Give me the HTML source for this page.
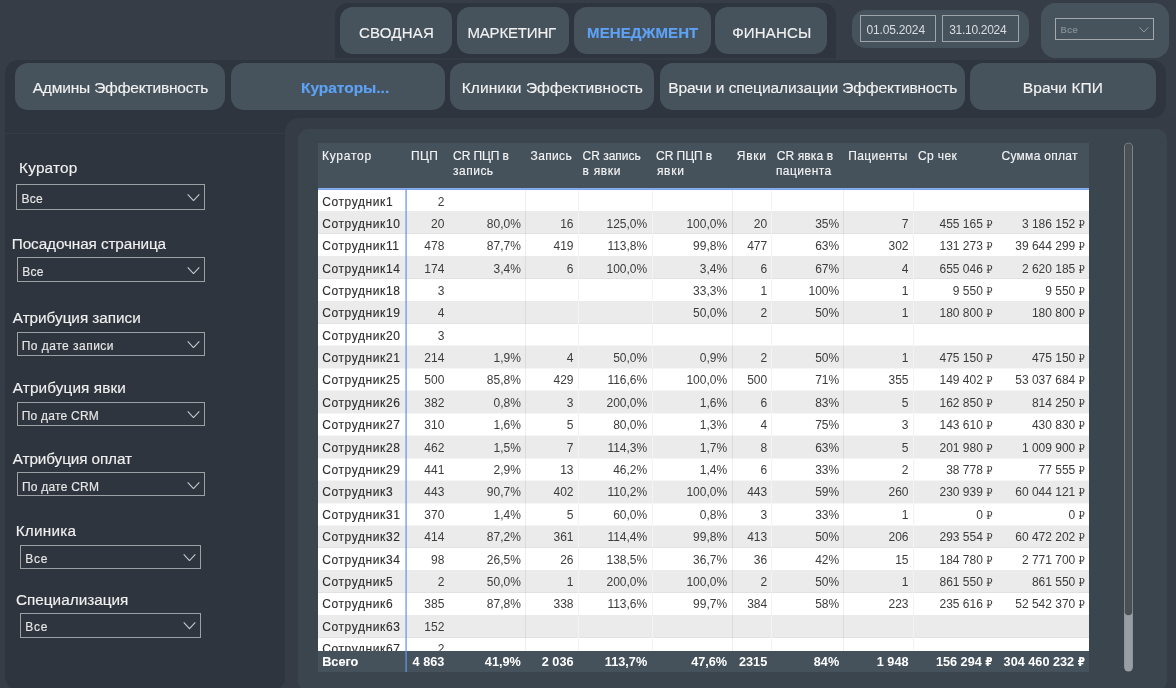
<!DOCTYPE html>
<html lang="ru"><head><meta charset="utf-8"><title>Менеджмент — Кураторы</title>
<style>
*{box-sizing:border-box;margin:0;padding:0}
html,body{width:1176px;height:688px;overflow:hidden}
body{background:#373d46;font-family:"Liberation Sans",sans-serif;position:relative;color:#fff}
#wrap{position:absolute;left:0;top:0;width:1176px;height:688px;overflow:hidden;will-change:transform}
.a{position:absolute}
.t{position:absolute;white-space:nowrap;line-height:1;-webkit-text-stroke:0.15px currentColor}
#tbl{position:absolute;left:0;top:0;width:1176px;height:688px;font-size:12px;color:#3c3c3c}
.row{position:absolute;left:318px;width:771px;overflow:hidden}
.rt{position:absolute;left:0;top:6.14px;width:100%;height:12px;line-height:12px}
.c{position:absolute;top:0;white-space:nowrap}
.c0{color:#2e2e2e;letter-spacing:0.6px;-webkit-text-stroke:0.12px currentColor}
.tot{font-weight:bold;color:#fff;font-size:12.7px}
.tot .rt{height:13px;line-height:12.7px}
.tot .rub{font-family:"DejaVu Sans Condensed","DejaVu Sans",sans-serif;font-size:11.5px}
.tot .c0{color:#fff;letter-spacing:0}
.rub{font-family:"DejaVu Serif Condensed","DejaVu Serif",serif;font-size:11px}
.vl{position:absolute;width:1px}
</style></head>
<body><div id="wrap">
<div class="a" style="left:335px;top:3px;width:501px;height:55px;background:#2f353e;border-radius:13px 13px 0 0"></div>
<div class="a" style="left:335px;top:58px;width:501px;height:2px;background:#343a43;border-radius:0"></div>
<div class="a" style="left:5px;top:59.5px;width:1161px;height:58.0px;background:#2f353e;border-radius:14px 14px 14px 0"></div>
<div class="a" style="left:5px;top:100px;width:295px;height:40px;background:#2f353e;border-radius:0"></div>
<div class="a" style="left:5px;top:117px;width:280.5px;height:573px;background:#2f353e;border-radius:0 0 14px 14px"></div>
<div class="a" style="left:5px;top:133px;width:280px;height:1px;background:#363c45;border-radius:0"></div>
<div class="a" style="left:285.3px;top:118.2px;width:914.7px;height:601.8px;background:#363c45;border-radius:14px 0 0 0"></div>
<div class="a" style="left:298px;top:128.5px;width:868.8px;height:562.0px;background:#3b454e;border-radius:10.5px"></div>
<div class="a" style="left:339.6px;top:7.1px;width:112.7px;height:46.7px;background:#46535d;border-radius:13px"></div>
<div id="n1" class="t" style="left:358.9px;top:24.7px;font-size:15px;color:#f1f1f1;letter-spacing:0.253px">СВОДНАЯ</div>
<div class="a" style="left:456.8px;top:7.1px;width:112.4px;height:46.7px;background:#46535d;border-radius:13px"></div>
<div id="n2" class="t" style="left:467.46px;top:24.7px;font-size:15px;color:#f1f1f1;letter-spacing:-0.17px">МАРКЕТИНГ</div>
<div class="a" style="left:574px;top:7.1px;width:137.3px;height:46.7px;background:#46535d;border-radius:13px"></div>
<div id="n3" class="t" style="left:587.0px;top:24.7px;font-size:15px;color:#5ea2f5;letter-spacing:0.133px;font-weight:bold">МЕНЕДЖМЕНТ</div>
<div class="a" style="left:714.8px;top:7.1px;width:112.4px;height:46.7px;background:#46535d;border-radius:13px"></div>
<div id="n4" class="t" style="left:732.16px;top:24.7px;font-size:15px;color:#f1f1f1;letter-spacing:0.213px">ФИНАНСЫ</div>
<div class="a" style="left:14.7px;top:63.1px;width:210.7px;height:46.6px;background:#46535d;border-radius:13px"></div>
<div id="m1" class="t" style="left:32.7px;top:80.18px;font-size:15.5px;color:#f1f1f1;letter-spacing:-0.177px">Админы Эффективность</div>
<div class="a" style="left:230.5px;top:63.1px;width:214.0px;height:46.6px;background:#46535d;border-radius:13px"></div>
<div id="m2" class="t" style="left:301.0px;top:80.18px;font-size:15.5px;color:#5ea2f5;letter-spacing:-0.024px;font-weight:bold">Кураторы...</div>
<div class="a" style="left:450px;top:63.1px;width:204.4px;height:46.6px;background:#46535d;border-radius:13px"></div>
<div id="m3" class="t" style="left:461.72px;top:80.18px;font-size:15.5px;color:#f1f1f1;letter-spacing:0.06px">Клиники Эффективность</div>
<div class="a" style="left:659.5px;top:63.1px;width:305.9px;height:46.6px;background:#46535d;border-radius:13px"></div>
<div id="m4" class="t" style="left:668.18px;top:80.18px;font-size:15.5px;color:#f1f1f1;letter-spacing:-0.096px">Врачи и специализации Эффективность</div>
<div class="a" style="left:969.5px;top:63.1px;width:186.5px;height:46.6px;background:#46535d;border-radius:13px"></div>
<div id="m5" class="t" style="left:1022.82px;top:80.18px;font-size:15.5px;color:#f1f1f1;letter-spacing:0.06px">Врачи КПИ</div>
<div class="a" style="left:851.5px;top:9.8px;width:177.7px;height:38.6px;background:#46535d;border-radius:14px"></div>
<div class="a" style="left:859.5px;top:15px;width:76.8px;height:26.9px;border:1px solid #9ea4a9"></div>
<div class="a" style="left:941.9px;top:15px;width:77.3px;height:26.9px;border:1px solid #9ea4a9"></div>
<div id="d1" class="t" style="left:866.44px;top:23.64px;font-size:12px;color:#d9dcdf;letter-spacing:-0.16px;-webkit-text-stroke:0">01.05.2024</div>
<div id="d2" class="t" style="left:949.16px;top:23.64px;font-size:12px;color:#d9dcdf;letter-spacing:-0.284px;-webkit-text-stroke:0">31.10.2024</div>
<div class="a" style="left:1041px;top:2.7px;width:127.7px;height:55.1px;background:#46535d;border-radius:14.5px"></div>
<div class="a" style="left:1055.1px;top:17.6px;width:99.3px;height:22.3px;border:1.2px solid #a3a8ad"></div>
<div id="s0" class="t" style="left:1060.44px;top:25.34px;font-size:9.4px;color:#8a9298;letter-spacing:0.51px">Все</div>
<svg class="a" style="left:1139.1px;top:27.2px" width="9.8" height="5.6" viewBox="0 0 9.8 5.6"><path d="M0.54 0.32 L4.9 5.06 L9.26 0.32" fill="none" stroke="#9aa0a6" stroke-width="0.9"/></svg>
<div id="l0" class="t" style="left:19.08px;top:160.05px;font-size:15.3px;color:#f0f0f0;letter-spacing:0.213px">Куратор</div>
<div class="a" style="left:16.2px;top:184.3px;width:188.8px;height:25.5px;border:1px solid #9da1a6"></div>
<div id="v0" class="t" style="left:21.54px;top:192.94px;font-size:12px;color:#e6e6e6;letter-spacing:0.2px">Все</div>
<svg class="a" style="left:186.8px;top:193.6px" width="13" height="7.3" viewBox="0 0 13 7.3"><path d="M0.69 0.41 L6.5 6.61 L12.31 0.41" fill="none" stroke="#c3c6ca" stroke-width="1.15"/></svg>
<div id="l1" class="t" style="left:11.82px;top:236.25px;font-size:15.3px;color:#f0f0f0;letter-spacing:-0.102px">Посадочная страница</div>
<div class="a" style="left:17px;top:257.4px;width:188px;height:24.2px;border:1px solid #9da1a6"></div>
<div id="v1" class="t" style="left:22.26px;top:265.64px;font-size:12px;color:#e6e6e6;letter-spacing:0.2px">Все</div>
<svg class="a" style="left:186.8px;top:266.7px" width="13" height="7.3" viewBox="0 0 13 7.3"><path d="M0.69 0.41 L6.5 6.61 L12.31 0.41" fill="none" stroke="#c3c6ca" stroke-width="1.15"/></svg>
<div id="l2" class="t" style="left:12.8px;top:310.25px;font-size:15.3px;color:#f0f0f0;letter-spacing:-0.027px">Атрибуция записи</div>
<div class="a" style="left:17px;top:331.6px;width:188px;height:24.1px;border:1px solid #9da1a6"></div>
<div id="v2" class="t" style="left:21.72px;top:340.04px;font-size:12px;color:#e6e6e6;letter-spacing:0.486px">По дате записи</div>
<svg class="a" style="left:186.8px;top:340.9px" width="13" height="7.3" viewBox="0 0 13 7.3"><path d="M0.69 0.41 L6.5 6.61 L12.31 0.41" fill="none" stroke="#c3c6ca" stroke-width="1.15"/></svg>
<div id="l3" class="t" style="left:12.8px;top:380.25px;font-size:15.3px;color:#f0f0f0;letter-spacing:0.123px">Атрибуция явки</div>
<div class="a" style="left:17px;top:401.6px;width:188px;height:24.1px;border:1px solid #9da1a6"></div>
<div id="v3" class="t" style="left:21.72px;top:409.94px;font-size:12px;color:#e6e6e6;letter-spacing:0.24px">По дате CRM</div>
<svg class="a" style="left:186.8px;top:410.9px" width="13" height="7.3" viewBox="0 0 13 7.3"><path d="M0.69 0.41 L6.5 6.61 L12.31 0.41" fill="none" stroke="#c3c6ca" stroke-width="1.15"/></svg>
<div id="l4" class="t" style="left:12.8px;top:450.75px;font-size:15.3px;color:#f0f0f0;letter-spacing:-0.109px">Атрибуция оплат</div>
<div class="a" style="left:17px;top:472.3px;width:188px;height:24.1px;border:1px solid #9da1a6"></div>
<div id="v4" class="t" style="left:21.9px;top:480.54px;font-size:12px;color:#e6e6e6;letter-spacing:0.232px">По дате CRM</div>
<svg class="a" style="left:186.8px;top:481.6px" width="13" height="7.3" viewBox="0 0 13 7.3"><path d="M0.69 0.41 L6.5 6.61 L12.31 0.41" fill="none" stroke="#c3c6ca" stroke-width="1.15"/></svg>
<div id="l5" class="t" style="left:15.72px;top:523.05px;font-size:15.3px;color:#f0f0f0;letter-spacing:0.227px">Клиника</div>
<div class="a" style="left:20.3px;top:544.7px;width:180.5px;height:24.3px;border:1px solid #9da1a6"></div>
<div id="v5" class="t" style="left:25.36px;top:552.94px;font-size:12px;color:#e6e6e6;letter-spacing:0.72px">Все</div>
<svg class="a" style="left:182.6px;top:554.0px" width="13" height="7.3" viewBox="0 0 13 7.3"><path d="M0.69 0.41 L6.5 6.61 L12.31 0.41" fill="none" stroke="#c3c6ca" stroke-width="1.15"/></svg>
<div id="l6" class="t" style="left:15.98px;top:591.55px;font-size:15.3px;color:#f0f0f0;letter-spacing:0.013px">Специализация</div>
<div class="a" style="left:20.3px;top:613px;width:180.5px;height:24.6px;border:1px solid #9da1a6"></div>
<div id="v6" class="t" style="left:25.18px;top:621.14px;font-size:12px;color:#e6e6e6;letter-spacing:0.75px">Все</div>
<svg class="a" style="left:182.6px;top:622.3px" width="13" height="7.3" viewBox="0 0 13 7.3"><path d="M0.69 0.41 L6.5 6.61 L12.31 0.41" fill="none" stroke="#c3c6ca" stroke-width="1.15"/></svg>
<div id="tbl">
<div class="a" style="left:318px;top:143px;width:771px;height:46.5px;background:#45525c;border-radius:0"></div>
<div id="h0" class="t" style="left:322.0px;top:149.84px;font-size:12px;color:#f3f3f3;letter-spacing:0.75px">Куратор</div>
<div id="h1" class="t" style="left:410.9px;top:149.84px;font-size:12px;color:#f3f3f3;letter-spacing:0.47px">ПЦП</div>
<div id="h2" class="t" style="left:453.08px;top:149.84px;font-size:12px;color:#f3f3f3;letter-spacing:-0.091px">CR ПЦП в</div>
<div id="h3" class="t" style="left:453.08px;top:165.44px;font-size:12px;color:#f3f3f3;letter-spacing:0.48px">запись</div>
<div id="h4" class="t" style="left:530.52px;top:149.84px;font-size:12px;color:#f3f3f3;letter-spacing:0.368px">Запись</div>
<div id="h5" class="t" style="left:582.62px;top:149.84px;font-size:12px;color:#f3f3f3;letter-spacing:-0.02px">CR запись</div>
<div id="h6" class="t" style="left:582.62px;top:165.44px;font-size:12px;color:#f3f3f3;letter-spacing:0.67px">в явки</div>
<div id="h7" class="t" style="left:656.08px;top:149.84px;font-size:12px;color:#f3f3f3;letter-spacing:-0.057px">CR ПЦП в</div>
<div id="h8" class="t" style="left:656.88px;top:165.44px;font-size:12px;color:#f3f3f3;letter-spacing:0.75px">явки</div>
<div id="h9" class="t" style="left:736.8px;top:149.84px;font-size:12px;color:#f3f3f3;letter-spacing:0.75px">Явки</div>
<div id="h10" class="t" style="left:776.7px;top:149.84px;font-size:12px;color:#f3f3f3;letter-spacing:0.12px">CR явка в</div>
<div id="h11" class="t" style="left:775.9px;top:165.44px;font-size:12px;color:#f3f3f3;letter-spacing:0.469px">пациента</div>
<div id="h12" class="t" style="left:848.26px;top:149.84px;font-size:12px;color:#f3f3f3;letter-spacing:0.389px">Пациенты</div>
<div id="h13" class="t" style="left:917.98px;top:149.84px;font-size:12px;color:#f3f3f3;letter-spacing:0.4px">Ср чек</div>
<div id="h14" class="t" style="left:1001.44px;top:149.84px;font-size:12px;color:#f3f3f3;letter-spacing:0.296px">Сумма оплат</div>
<div class="a" style="left:318px;top:188px;width:771px;height:463.1px;background:#ffffff;border-radius:0"></div>
<div class="a" style="left:318px;top:210.84px;width:771px;height:1.0px;background:rgba(0,0,0,0.035);border-radius:0"></div>
<div class="a" style="left:318px;top:211.34px;width:771px;height:22.44px;background:#ebebeb;border-radius:0"></div>
<div class="a" style="left:318px;top:233.28px;width:771px;height:1.0px;background:rgba(0,0,0,0.035);border-radius:0"></div>
<div class="a" style="left:318px;top:255.72px;width:771px;height:1.0px;background:rgba(0,0,0,0.035);border-radius:0"></div>
<div class="a" style="left:318px;top:256.22px;width:771px;height:22.44px;background:#ebebeb;border-radius:0"></div>
<div class="a" style="left:318px;top:278.16px;width:771px;height:1.0px;background:rgba(0,0,0,0.035);border-radius:0"></div>
<div class="a" style="left:318px;top:300.6px;width:771px;height:1.0px;background:rgba(0,0,0,0.035);border-radius:0"></div>
<div class="a" style="left:318px;top:301.1px;width:771px;height:22.44px;background:#ebebeb;border-radius:0"></div>
<div class="a" style="left:318px;top:323.04px;width:771px;height:1.0px;background:rgba(0,0,0,0.035);border-radius:0"></div>
<div class="a" style="left:318px;top:345.48px;width:771px;height:1.0px;background:rgba(0,0,0,0.035);border-radius:0"></div>
<div class="a" style="left:318px;top:345.98px;width:771px;height:22.44px;background:#ebebeb;border-radius:0"></div>
<div class="a" style="left:318px;top:367.92px;width:771px;height:1.0px;background:rgba(0,0,0,0.035);border-radius:0"></div>
<div class="a" style="left:318px;top:390.36px;width:771px;height:1.0px;background:rgba(0,0,0,0.035);border-radius:0"></div>
<div class="a" style="left:318px;top:390.86px;width:771px;height:22.44px;background:#ebebeb;border-radius:0"></div>
<div class="a" style="left:318px;top:412.8px;width:771px;height:1.0px;background:rgba(0,0,0,0.035);border-radius:0"></div>
<div class="a" style="left:318px;top:435.24px;width:771px;height:1.0px;background:rgba(0,0,0,0.035);border-radius:0"></div>
<div class="a" style="left:318px;top:435.74px;width:771px;height:22.44px;background:#ebebeb;border-radius:0"></div>
<div class="a" style="left:318px;top:457.68px;width:771px;height:1.0px;background:rgba(0,0,0,0.035);border-radius:0"></div>
<div class="a" style="left:318px;top:480.12px;width:771px;height:1.0px;background:rgba(0,0,0,0.035);border-radius:0"></div>
<div class="a" style="left:318px;top:480.62px;width:771px;height:22.44px;background:#ebebeb;border-radius:0"></div>
<div class="a" style="left:318px;top:502.56px;width:771px;height:1.0px;background:rgba(0,0,0,0.035);border-radius:0"></div>
<div class="a" style="left:318px;top:525.0px;width:771px;height:1.0px;background:rgba(0,0,0,0.035);border-radius:0"></div>
<div class="a" style="left:318px;top:525.5px;width:771px;height:22.44px;background:#ebebeb;border-radius:0"></div>
<div class="a" style="left:318px;top:547.44px;width:771px;height:1.0px;background:rgba(0,0,0,0.035);border-radius:0"></div>
<div class="a" style="left:318px;top:569.88px;width:771px;height:1.0px;background:rgba(0,0,0,0.035);border-radius:0"></div>
<div class="a" style="left:318px;top:570.38px;width:771px;height:22.44px;background:#ebebeb;border-radius:0"></div>
<div class="a" style="left:318px;top:592.32px;width:771px;height:1.0px;background:rgba(0,0,0,0.035);border-radius:0"></div>
<div class="a" style="left:318px;top:614.76px;width:771px;height:1.0px;background:rgba(0,0,0,0.035);border-radius:0"></div>
<div class="a" style="left:318px;top:615.26px;width:771px;height:22.44px;background:#ebebeb;border-radius:0"></div>
<div class="a" style="left:318px;top:637.2px;width:771px;height:1.0px;background:rgba(0,0,0,0.035);border-radius:0"></div>
<div class="row" style="top:196.04px;height:14px"><div class="rt" style="top:0"><div class="c c0" style="left:4.2px">Сотрудник1</div><div class="c" style="right:644.7px">2</div></div></div>
<div class="row" style="top:217.82px;height:14px"><div class="rt" style="top:0"><div class="c c0" style="left:4.2px">Сотрудник10</div><div class="c" style="right:644.7px">20</div><div class="c" style="right:568.2px">80,0%</div><div class="c" style="right:515.5px">16</div><div class="c" style="right:441.8px">125,0%</div><div class="c" style="right:361.9px">100,0%</div><div class="c" style="right:321.8px">20</div><div class="c" style="right:249.8px">35%</div><div class="c" style="right:180.5px">7</div><div class="c" style="right:96.5px">455 165 <span class="rub">₽</span></div><div class="c" style="right:4.1px">3 186 152 <span class="rub">₽</span></div></div></div>
<div class="row" style="top:240.2px;height:14px"><div class="rt" style="top:0"><div class="c c0" style="left:4.2px">Сотрудник11</div><div class="c" style="right:644.7px">478</div><div class="c" style="right:568.2px">87,7%</div><div class="c" style="right:515.5px">419</div><div class="c" style="right:441.8px">113,8%</div><div class="c" style="right:361.9px">99,8%</div><div class="c" style="right:321.8px">477</div><div class="c" style="right:249.8px">63%</div><div class="c" style="right:180.5px">302</div><div class="c" style="right:96.5px">131 273 <span class="rub">₽</span></div><div class="c" style="right:4.1px">39 644 299 <span class="rub">₽</span></div></div></div>
<div class="row" style="top:262.58px;height:14px"><div class="rt" style="top:0"><div class="c c0" style="left:4.2px">Сотрудник14</div><div class="c" style="right:644.7px">174</div><div class="c" style="right:568.2px">3,4%</div><div class="c" style="right:515.5px">6</div><div class="c" style="right:441.8px">100,0%</div><div class="c" style="right:361.9px">3,4%</div><div class="c" style="right:321.8px">6</div><div class="c" style="right:249.8px">67%</div><div class="c" style="right:180.5px">4</div><div class="c" style="right:96.5px">655 046 <span class="rub">₽</span></div><div class="c" style="right:4.1px">2 620 185 <span class="rub">₽</span></div></div></div>
<div class="row" style="top:284.96px;height:14px"><div class="rt" style="top:0"><div class="c c0" style="left:4.2px">Сотрудник18</div><div class="c" style="right:644.7px">3</div><div class="c" style="right:361.9px">33,3%</div><div class="c" style="right:321.8px">1</div><div class="c" style="right:249.8px">100%</div><div class="c" style="right:180.5px">1</div><div class="c" style="right:96.5px">9 550 <span class="rub">₽</span></div><div class="c" style="right:4.1px">9 550 <span class="rub">₽</span></div></div></div>
<div class="row" style="top:307.34px;height:14px"><div class="rt" style="top:0"><div class="c c0" style="left:4.2px">Сотрудник19</div><div class="c" style="right:644.7px">4</div><div class="c" style="right:361.9px">50,0%</div><div class="c" style="right:321.8px">2</div><div class="c" style="right:249.8px">50%</div><div class="c" style="right:180.5px">1</div><div class="c" style="right:96.5px">180 800 <span class="rub">₽</span></div><div class="c" style="right:4.1px">180 800 <span class="rub">₽</span></div></div></div>
<div class="row" style="top:329.72px;height:14px"><div class="rt" style="top:0"><div class="c c0" style="left:4.2px">Сотрудник20</div><div class="c" style="right:644.7px">3</div></div></div>
<div class="row" style="top:352.1px;height:14px"><div class="rt" style="top:0"><div class="c c0" style="left:4.2px">Сотрудник21</div><div class="c" style="right:644.7px">214</div><div class="c" style="right:568.2px">1,9%</div><div class="c" style="right:515.5px">4</div><div class="c" style="right:441.8px">50,0%</div><div class="c" style="right:361.9px">0,9%</div><div class="c" style="right:321.8px">2</div><div class="c" style="right:249.8px">50%</div><div class="c" style="right:180.5px">1</div><div class="c" style="right:96.5px">475 150 <span class="rub">₽</span></div><div class="c" style="right:4.1px">475 150 <span class="rub">₽</span></div></div></div>
<div class="row" style="top:374.48px;height:14px"><div class="rt" style="top:0"><div class="c c0" style="left:4.2px">Сотрудник25</div><div class="c" style="right:644.7px">500</div><div class="c" style="right:568.2px">85,8%</div><div class="c" style="right:515.5px">429</div><div class="c" style="right:441.8px">116,6%</div><div class="c" style="right:361.9px">100,0%</div><div class="c" style="right:321.8px">500</div><div class="c" style="right:249.8px">71%</div><div class="c" style="right:180.5px">355</div><div class="c" style="right:96.5px">149 402 <span class="rub">₽</span></div><div class="c" style="right:4.1px">53 037 684 <span class="rub">₽</span></div></div></div>
<div class="row" style="top:396.86px;height:14px"><div class="rt" style="top:0"><div class="c c0" style="left:4.2px">Сотрудник26</div><div class="c" style="right:644.7px">382</div><div class="c" style="right:568.2px">0,8%</div><div class="c" style="right:515.5px">3</div><div class="c" style="right:441.8px">200,0%</div><div class="c" style="right:361.9px">1,6%</div><div class="c" style="right:321.8px">6</div><div class="c" style="right:249.8px">83%</div><div class="c" style="right:180.5px">5</div><div class="c" style="right:96.5px">162 850 <span class="rub">₽</span></div><div class="c" style="right:4.1px">814 250 <span class="rub">₽</span></div></div></div>
<div class="row" style="top:419.24px;height:14px"><div class="rt" style="top:0"><div class="c c0" style="left:4.2px">Сотрудник27</div><div class="c" style="right:644.7px">310</div><div class="c" style="right:568.2px">1,6%</div><div class="c" style="right:515.5px">5</div><div class="c" style="right:441.8px">80,0%</div><div class="c" style="right:361.9px">1,3%</div><div class="c" style="right:321.8px">4</div><div class="c" style="right:249.8px">75%</div><div class="c" style="right:180.5px">3</div><div class="c" style="right:96.5px">143 610 <span class="rub">₽</span></div><div class="c" style="right:4.1px">430 830 <span class="rub">₽</span></div></div></div>
<div class="row" style="top:441.62px;height:14px"><div class="rt" style="top:0"><div class="c c0" style="left:4.2px">Сотрудник28</div><div class="c" style="right:644.7px">462</div><div class="c" style="right:568.2px">1,5%</div><div class="c" style="right:515.5px">7</div><div class="c" style="right:441.8px">114,3%</div><div class="c" style="right:361.9px">1,7%</div><div class="c" style="right:321.8px">8</div><div class="c" style="right:249.8px">63%</div><div class="c" style="right:180.5px">5</div><div class="c" style="right:96.5px">201 980 <span class="rub">₽</span></div><div class="c" style="right:4.1px">1 009 900 <span class="rub">₽</span></div></div></div>
<div class="row" style="top:464.0px;height:14px"><div class="rt" style="top:0"><div class="c c0" style="left:4.2px">Сотрудник29</div><div class="c" style="right:644.7px">441</div><div class="c" style="right:568.2px">2,9%</div><div class="c" style="right:515.5px">13</div><div class="c" style="right:441.8px">46,2%</div><div class="c" style="right:361.9px">1,4%</div><div class="c" style="right:321.8px">6</div><div class="c" style="right:249.8px">33%</div><div class="c" style="right:180.5px">2</div><div class="c" style="right:96.5px">38 778 <span class="rub">₽</span></div><div class="c" style="right:4.1px">77 555 <span class="rub">₽</span></div></div></div>
<div class="row" style="top:486.38px;height:14px"><div class="rt" style="top:0"><div class="c c0" style="left:4.2px">Сотрудник3</div><div class="c" style="right:644.7px">443</div><div class="c" style="right:568.2px">90,7%</div><div class="c" style="right:515.5px">402</div><div class="c" style="right:441.8px">110,2%</div><div class="c" style="right:361.9px">100,0%</div><div class="c" style="right:321.8px">443</div><div class="c" style="right:249.8px">59%</div><div class="c" style="right:180.5px">260</div><div class="c" style="right:96.5px">230 939 <span class="rub">₽</span></div><div class="c" style="right:4.1px">60 044 121 <span class="rub">₽</span></div></div></div>
<div class="row" style="top:508.76px;height:14px"><div class="rt" style="top:0"><div class="c c0" style="left:4.2px">Сотрудник31</div><div class="c" style="right:644.7px">370</div><div class="c" style="right:568.2px">1,4%</div><div class="c" style="right:515.5px">5</div><div class="c" style="right:441.8px">60,0%</div><div class="c" style="right:361.9px">0,8%</div><div class="c" style="right:321.8px">3</div><div class="c" style="right:249.8px">33%</div><div class="c" style="right:180.5px">1</div><div class="c" style="right:96.5px">0 <span class="rub">₽</span></div><div class="c" style="right:4.1px">0 <span class="rub">₽</span></div></div></div>
<div class="row" style="top:531.14px;height:14px"><div class="rt" style="top:0"><div class="c c0" style="left:4.2px">Сотрудник32</div><div class="c" style="right:644.7px">414</div><div class="c" style="right:568.2px">87,2%</div><div class="c" style="right:515.5px">361</div><div class="c" style="right:441.8px">114,4%</div><div class="c" style="right:361.9px">99,8%</div><div class="c" style="right:321.8px">413</div><div class="c" style="right:249.8px">50%</div><div class="c" style="right:180.5px">206</div><div class="c" style="right:96.5px">293 554 <span class="rub">₽</span></div><div class="c" style="right:4.1px">60 472 202 <span class="rub">₽</span></div></div></div>
<div class="row" style="top:553.52px;height:14px"><div class="rt" style="top:0"><div class="c c0" style="left:4.2px">Сотрудник34</div><div class="c" style="right:644.7px">98</div><div class="c" style="right:568.2px">26,5%</div><div class="c" style="right:515.5px">26</div><div class="c" style="right:441.8px">138,5%</div><div class="c" style="right:361.9px">36,7%</div><div class="c" style="right:321.8px">36</div><div class="c" style="right:249.8px">42%</div><div class="c" style="right:180.5px">15</div><div class="c" style="right:96.5px">184 780 <span class="rub">₽</span></div><div class="c" style="right:4.1px">2 771 700 <span class="rub">₽</span></div></div></div>
<div class="row" style="top:575.9px;height:14px"><div class="rt" style="top:0"><div class="c c0" style="left:4.2px">Сотрудник5</div><div class="c" style="right:644.7px">2</div><div class="c" style="right:568.2px">50,0%</div><div class="c" style="right:515.5px">1</div><div class="c" style="right:441.8px">200,0%</div><div class="c" style="right:361.9px">100,0%</div><div class="c" style="right:321.8px">2</div><div class="c" style="right:249.8px">50%</div><div class="c" style="right:180.5px">1</div><div class="c" style="right:96.5px">861 550 <span class="rub">₽</span></div><div class="c" style="right:4.1px">861 550 <span class="rub">₽</span></div></div></div>
<div class="row" style="top:598.28px;height:14px"><div class="rt" style="top:0"><div class="c c0" style="left:4.2px">Сотрудник6</div><div class="c" style="right:644.7px">385</div><div class="c" style="right:568.2px">87,8%</div><div class="c" style="right:515.5px">338</div><div class="c" style="right:441.8px">113,6%</div><div class="c" style="right:361.9px">99,7%</div><div class="c" style="right:321.8px">384</div><div class="c" style="right:249.8px">58%</div><div class="c" style="right:180.5px">223</div><div class="c" style="right:96.5px">235 616 <span class="rub">₽</span></div><div class="c" style="right:4.1px">52 542 370 <span class="rub">₽</span></div></div></div>
<div class="row" style="top:620.66px;height:14px"><div class="rt" style="top:0"><div class="c c0" style="left:4.2px">Сотрудник63</div><div class="c" style="right:644.7px">152</div></div></div>
<div class="row" style="top:643.04px;height:7.56px"><div class="rt" style="top:0"><div class="c c0" style="left:4.2px">Сотрудник67</div><div class="c" style="right:644.7px">2</div></div></div>
<div class="a" style="left:524.8px;top:189.3px;width:1.0px;height:461.3px;background:rgba(0,0,0,0.065);border-radius:0"></div>
<div class="a" style="left:731.8px;top:189.3px;width:1.0px;height:461.3px;background:rgba(0,0,0,0.065);border-radius:0"></div>
<div class="a" style="left:842.9px;top:189.3px;width:1.0px;height:461.3px;background:rgba(0,0,0,0.065);border-radius:0"></div>
<div class="a" style="left:577.5px;top:189.3px;width:1.0px;height:461.3px;background:#f3f3f3;border-radius:0"></div>
<div class="a" style="left:651.7px;top:189.3px;width:1.0px;height:461.3px;background:#f3f3f3;border-radius:0"></div>
<div class="a" style="left:770.9px;top:189.3px;width:1.0px;height:461.3px;background:#f3f3f3;border-radius:0"></div>
<div class="a" style="left:913.1px;top:189.3px;width:1.0px;height:461.3px;background:#f3f3f3;border-radius:0"></div>
<div class="row tot" style="top:650.6px;height:21.0px;background:#45525c"><div class="rt" style="top:5.05px"><div class="c c0" style="left:4.2px">Всего</div><div class="c" style="right:644.7px">4 863</div><div class="c" style="right:568.2px">41,9%</div><div class="c" style="right:515.5px">2 036</div><div class="c" style="right:441.8px">113,7%</div><div class="c" style="right:361.9px">47,6%</div><div class="c" style="right:321.8px">2315</div><div class="c" style="right:249.8px">84%</div><div class="c" style="right:180.5px">1 948</div><div class="c" style="right:96.5px">156 294 <span class="rub">₽</span></div><div class="c" style="right:4.1px">304 460 232 <span class="rub">₽</span></div></div></div>
<div class="a" style="left:318px;top:188px;width:771px;height:1px;background:rgba(91,143,230,0.72);border-radius:0"></div>
<div class="a" style="left:318px;top:189px;width:771px;height:1px;background:rgba(91,143,230,0.8);border-radius:0"></div>
<div class="a" style="left:405px;top:189px;width:1px;height:482.6px;background:rgba(97,150,234,0.55);border-radius:0"></div>
<div class="a" style="left:406px;top:189px;width:1px;height:482.6px;background:rgba(97,150,234,0.7);border-radius:0"></div>
</div>
<svg class="a" style="left:1120px;top:138px" width="18" height="540" viewBox="0 0 18 540"><rect x="4.1" y="4.7" width="8.8" height="528.8" rx="4.4" fill="#999ea4"/><rect x="4.75" y="5.3" width="7.5" height="472" rx="3.75" fill="#4b4f56"/></svg>
</div></body></html>
